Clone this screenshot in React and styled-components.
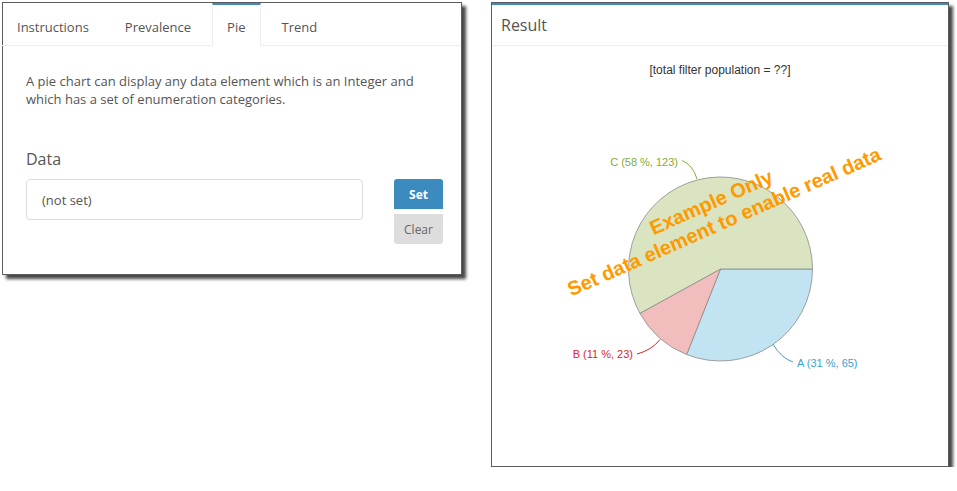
import React from "react";
import styled, { createGlobalStyle } from "styled-components";

const Global = createGlobalStyle`
  html, body { margin: 0; padding: 0; background: #fff; }
  body { font-family: "Open Sans", "Noto Sans", sans-serif; color: #555; }
  * { box-sizing: border-box; }
`;

const BLUE = "#3b8bbf";

const Page = styled.div`
  display: flex;
  align-items: flex-start;
  gap: 29px;
  padding: 2px 0 0 2px;
`;

const Panel = styled.section`
  width: ${(p) => p.$w}px;
  height: ${(p) => p.$h}px;
  background: #fff;
  border: 1px solid #5c5c5c;
  box-shadow: 4px 4px 3px rgba(40, 40, 40, 0.85);
  display: flex;
  flex-direction: column;
`;

const TabBar = styled.nav`
  display: flex;
  align-items: flex-start;
  height: 43px;
  border-bottom: 1px solid #eee;
  margin-left: -1px;
`;

const Tab = styled.div`
  height: 43px;
  margin-bottom: -1px;
  margin-right: 6px;
  padding: 2px 14px 0;
  display: flex;
  align-items: center;
  font-size: 13px;
  line-height: 18px;
  color: #555;
  border-top: 2px solid ${(p) => (p.$active ? BLUE : "transparent")};
  border-left: 1px solid ${(p) => (p.$active ? "#eee" : "transparent")};
  border-right: 1px solid ${(p) => (p.$active ? "#eee" : "transparent")};
  background: ${(p) => (p.$active ? "#fff" : "transparent")};
`;

const TabBody = styled.div`
  padding: 26px 18px 0 23px;
`;

const Para = styled.p`
  margin: 0;
  font-size: 13px;
  line-height: 18px;
  color: #555;
`;

const FieldLabel = styled.h3`
  margin: 41px 0 0;
  font-size: 16px;
  line-height: 20px;
  font-weight: 400;
  color: #555;
`;

const FieldRow = styled.div`
  display: flex;
  align-items: flex-start;
  gap: 31px;
  margin-top: 10px;
`;

const ValueBox = styled.div`
  flex: 1;
  height: 41px;
  border: 1px solid #ddd;
  border-radius: 4px;
  padding: 0 15px;
  display: flex;
  align-items: center;
  font-size: 13px;
  color: #555;
`;

const ButtonStack = styled.div`
  display: flex;
  flex-direction: column;
  gap: 5px;
  width: 49px;
`;

const Button = styled.button`
  height: 30px;
  border: none;
  padding: 0;
  font-family: inherit;
  font-size: 12px;
  cursor: pointer;
  background: ${(p) => (p.$primary ? BLUE : "#ddd")};
  color: ${(p) => (p.$primary ? "#fff" : "#666")};
  font-weight: ${(p) => (p.$primary ? 700 : 400)};
  border-radius: ${(p) => (p.$primary ? "3px 3px 0 0" : "0 0 3px 3px")};
`;

const PanelHeader = styled.header`
  height: 43px;
  border-top: 2px solid ${BLUE};
  border-bottom: 1px solid #eee;
  padding-left: 9px;
  display: flex;
  align-items: center;
  font-size: 16px;
  line-height: 20px;
  color: #555;
`;

const Caption = styled.div`
  height: 48px;
  line-height: 48px;
  text-align: center;
  font-family: "Liberation Sans", Arial, sans-serif;
  font-size: 12px;
  color: #333;
`;

const Chart = styled.svg`
  display: block;
  font-family: "Liberation Sans", Arial, sans-serif;
`;

const cx = 720.5;
const cy = 269;
const r = 92;

const slices = [
  { key: "A", pct: 31, n: 65, fill: "#c1e3f2", color: "#3aa3cf" },
  { key: "B", pct: 11, n: 23, fill: "#f2bdbd", color: "#d9262b" },
  { key: "C", pct: 58, n: 123, fill: "#dae4c1", color: "#82ad32" },
];

function pt(deg) {
  const a = (deg * Math.PI) / 180;
  return [cx + r * Math.cos(a), cy + r * Math.sin(a)];
}

function PieChart() {
  let start = 0;
  const paths = slices.map((s) => {
    const sweep = (s.pct / 100) * 360;
    const [x1, y1] = pt(start);
    const [x2, y2] = pt(start + sweep);
    const large = sweep > 180 ? 1 : 0;
    const d = `M${cx},${cy} L${x1.toFixed(2)},${y1.toFixed(2)} A${r},${r} 0 ${large} 1 ${x2.toFixed(2)},${y2.toFixed(2)} Z`;
    start += sweep;
    return <path key={s.key} d={d} fill={s.fill} stroke="#8a8a8a" strokeWidth="0.8" />;
  });
  const labelOf = (s) => `${s.key} (${s.pct} %, ${s.n})`;
  return (
    <Chart width="456" height="370" viewBox="492 94 456 370">
      {paths}
      <path d="M682,160.5 Q693,165 697,179" fill="none" stroke={slices[2].color} strokeWidth="1" />
      <text x="678" y="165.5" textAnchor="end" fontSize="11" fill={slices[2].color}>{labelOf(slices[2])}</text>
      <path d="M637,354 Q652,350 660,339.5" fill="none" stroke={slices[1].color} strokeWidth="1" />
      <text x="633" y="358" textAnchor="end" fontSize="11" fill={slices[1].color}>{labelOf(slices[1])}</text>
      <path d="M773,344 Q781,358 793,362" fill="none" stroke={slices[0].color} strokeWidth="1" />
      <text x="797" y="366.5" fontSize="11" fill={slices[0].color}>{labelOf(slices[0])}</text>
      <g transform="translate(714,208.5) rotate(-23.8)" fill="#ff9900" fontSize="20" fontWeight="700" textAnchor="middle">
        <text x="0" y="0">Example Only</text>
        <text x="4" y="23">Set data element to enable real data</text>
      </g>
    </Chart>
  );
}

const tabs = ["Instructions", "Prevalence", "Pie", "Trend"];

export default function App() {
  return (
    <>
      <Global />
      <Page>
        <Panel $w={460} $h={273}>
          <TabBar>
            {tabs.map((t) => (
              <Tab key={t} $active={t === "Pie"}>{t}</Tab>
            ))}
          </TabBar>
          <TabBody>
            <Para>
              A pie chart can display any data element which is an Integer and
              <br />
              which has a set of enumeration categories.
            </Para>
            <FieldLabel>Data</FieldLabel>
            <FieldRow>
              <ValueBox>(not set)</ValueBox>
              <ButtonStack>
                <Button $primary>Set</Button>
                <Button>Clear</Button>
              </ButtonStack>
            </FieldRow>
          </TabBody>
        </Panel>
        <Panel $w={458} $h={465}>
          <PanelHeader>Result</PanelHeader>
          <Caption>[total filter population = ??]</Caption>
          <PieChart />
        </Panel>
      </Page>
    </>
  );
}
